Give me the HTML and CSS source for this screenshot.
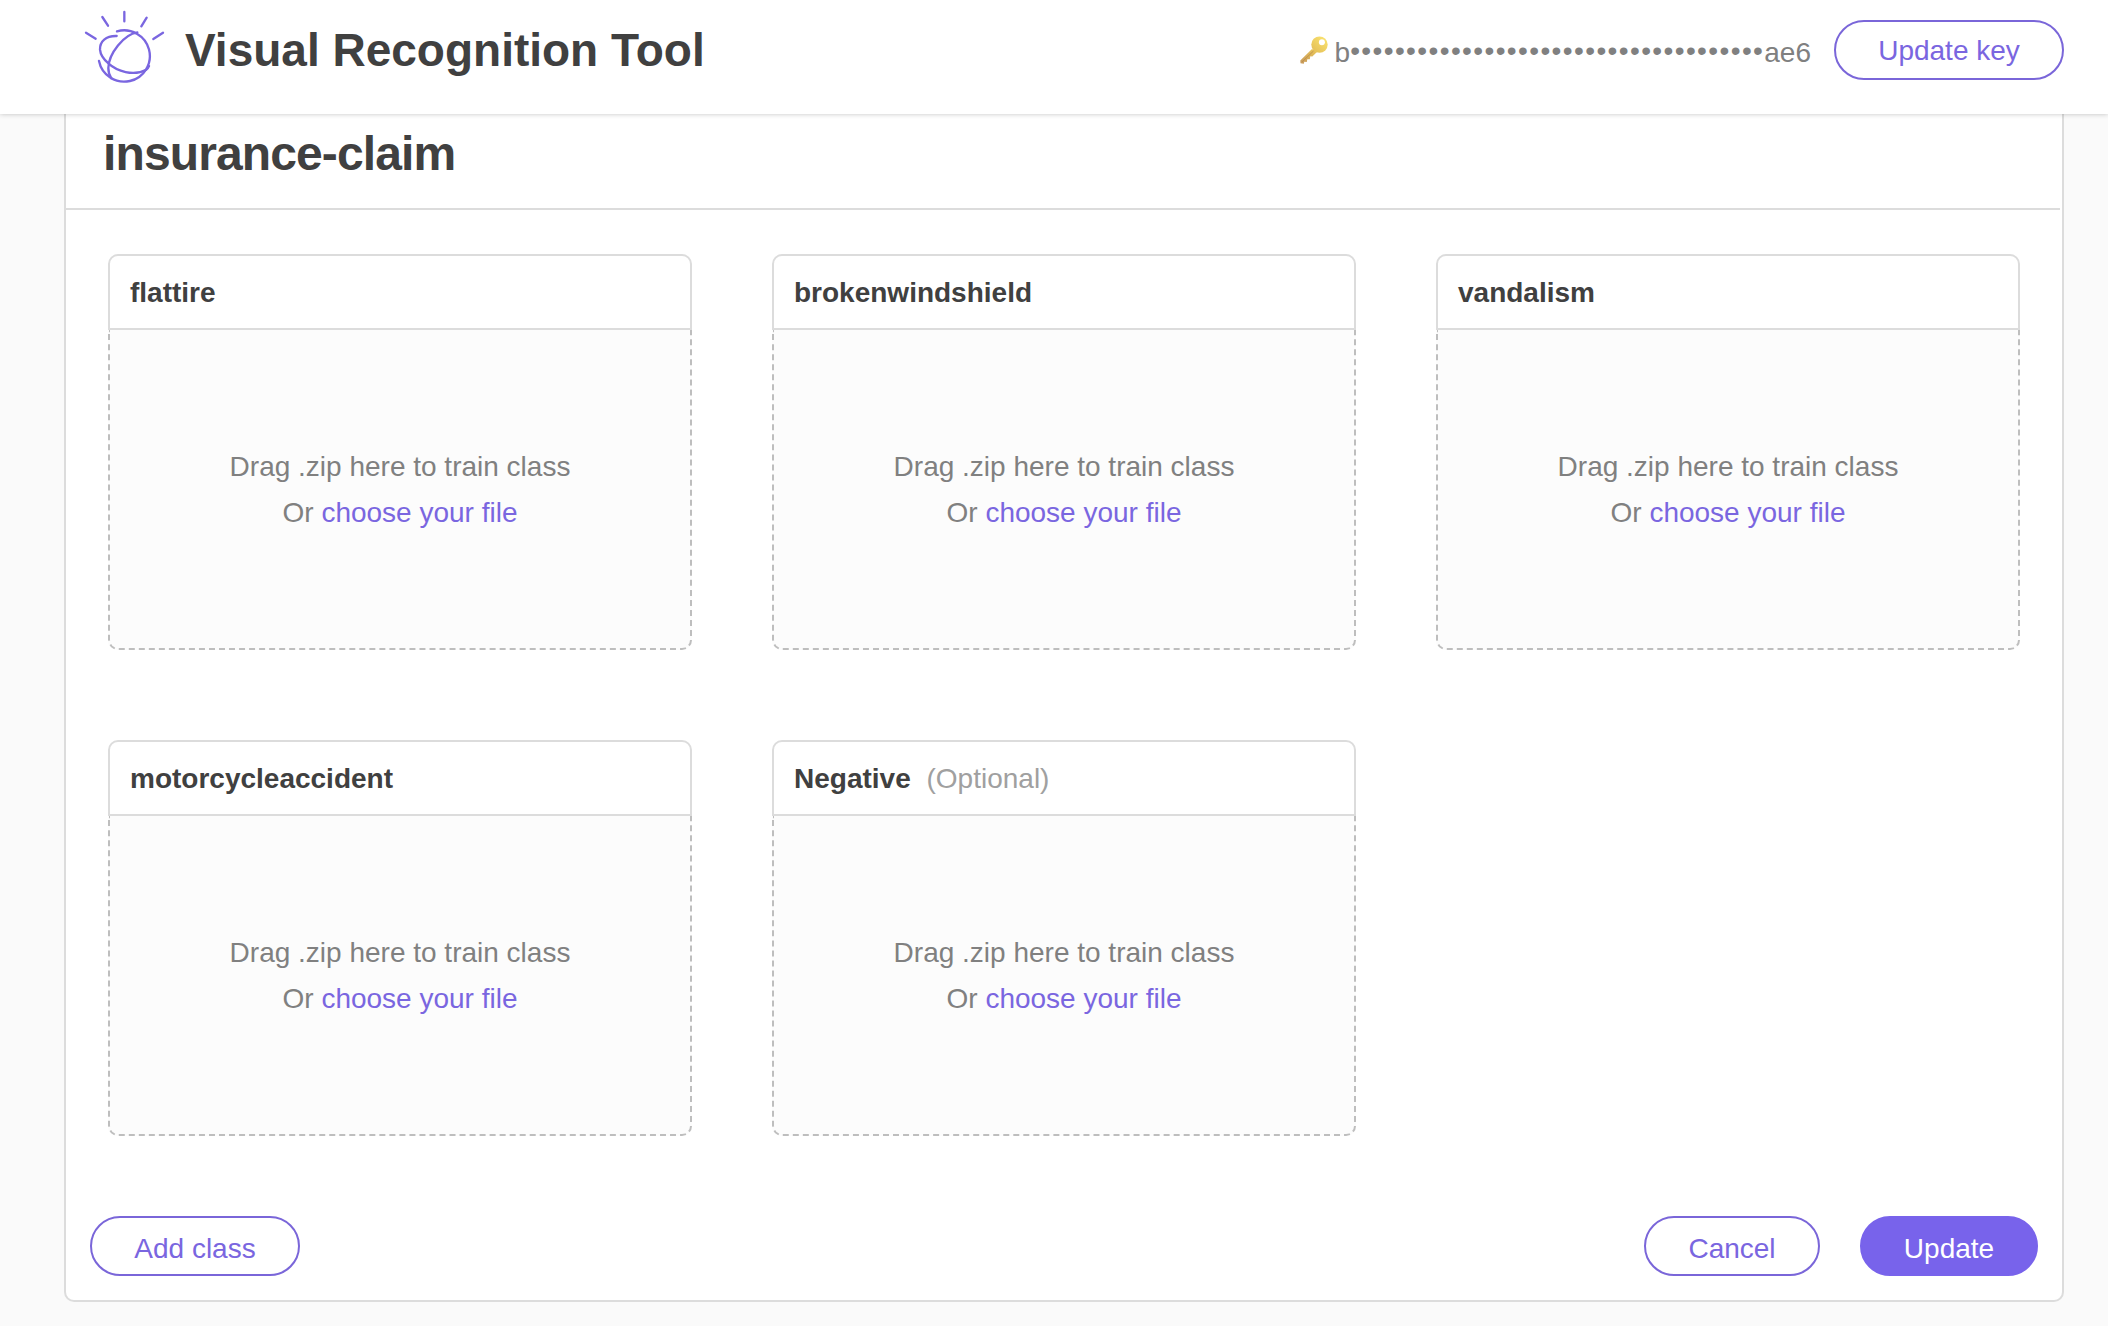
FILE: index.html
```html
<!DOCTYPE html>
<html lang="en">
<head>
<meta charset="utf-8">
<title>Visual Recognition Tool</title>
<link rel="stylesheet" href="styles.css">
</head>
<body>
<header class="topbar">
  <svg class="logo" viewBox="99 30 246 222" fill="none" stroke="#7a66e0" stroke-width="7" stroke-linecap="round" stroke-linejoin="round">
    <path d="M108 98l29 18M157 51l17 26M223 36v28M290 53l-16 26M339 98l-29 19"/>
    <path d="M201 94A77 77 0 1 1 147 183"/>
    <path d="M200 108C168 107 149 124 150 149C151 162 163 180 176 191C200 213 250 230 289 209Q294 205 297 198"/>
    <path d="M262 97C222 103 176 160 175 204C175 216 178 226 184 235"/>
  </svg>
  <h1 class="brand">Visual Recognition Tool</h1>
  <div class="key">
    <svg class="key-icon" viewBox="0 0 28 28">
      <defs><linearGradient id="gold" gradientUnits="userSpaceOnUse" x1="24" y1="2" x2="2" y2="27"><stop offset="0" stop-color="#f8e06e"/><stop offset=".5" stop-color="#e5c058"/><stop offset="1" stop-color="#c99c5c"/></linearGradient></defs>
      <path fill="url(#gold)" d="M12 13L.3 24.500L.5 27.300L3.800 27.800L4.300 25.800L6.800 26L7.300 23.300L9.800 23.300L10.300 20.300L12.300 20.500L17 16Z"/>
      <circle cx="19.500" cy="8.600" r="8.200" fill="url(#gold)"/>
      <circle cx="21.900" cy="6.300" r="3" fill="#fff"/>
      <path fill="none" stroke="#b98a49" stroke-width=".8" d="M2 26L13.500 15"/>
    </svg>
    <span class="key-text">b<span class="dots">•••••••••••••••••••••••••••••••••••••</span>ae6</span>
  </div>
  <button class="btn btn-key">Update key</button>
</header>
<main class="panel">
  <h2 class="title">insurance-claim</h2>
  <div class="classes">
    <section class="card">
      <h3 class="card-name">flattire</h3>
      <div class="drop"><span>Drag .zip here to train class</span><span>Or <a class="link">choose your file</a></span></div>
    </section>
    <section class="card">
      <h3 class="card-name">brokenwindshield</h3>
      <div class="drop"><span>Drag .zip here to train class</span><span>Or <a class="link">choose your file</a></span></div>
    </section>
    <section class="card">
      <h3 class="card-name">vandalism</h3>
      <div class="drop"><span>Drag .zip here to train class</span><span>Or <a class="link">choose your file</a></span></div>
    </section>
    <section class="card">
      <h3 class="card-name">motorcycleaccident</h3>
      <div class="drop"><span>Drag .zip here to train class</span><span>Or <a class="link">choose your file</a></span></div>
    </section>
    <section class="card">
      <h3 class="card-name">Negative <span class="optional">(Optional)</span></h3>
      <div class="drop"><span>Drag .zip here to train class</span><span>Or <a class="link">choose your file</a></span></div>
    </section>
  </div>
  <footer class="actions">
    <button class="btn btn-add">Add class</button>
    <button class="btn btn-cancel">Cancel</button>
    <button class="btn btn-update">Update</button>
  </footer>
</main>
</body>
</html>
```
FILE: styles.css
```css
* { box-sizing: border-box; }

body {
  margin: 0;
  height: 1326px;
  overflow: hidden;
  background: #fafafa;
  color: #404040;
  font: 28px "Liberation Sans", Helvetica, Arial, sans-serif;
}

h1, h2, h3 { margin: 0; }

.topbar {
  position: relative;
  z-index: 1;
  display: flex;
  align-items: center;
  height: 114px;
  padding: 0 44px 14px 83px;
  background: #fff;
  box-shadow: 0 0 5px rgba(0, 0, 0, .24);
}

.logo { width: 82px; height: 74px; margin-top: -6px; }
.brand { margin-left: 20px; font-size: 46px; line-height: 60px; white-space: nowrap; }

.key { display: flex; align-items: center; margin-left: auto; color: #808080; }
.key-icon { width: 28px; height: 28px; margin-right: 7px; }
.key-text { padding-top: 6px; line-height: 32px; white-space: nowrap; }
.dots { letter-spacing: 1.39px; vertical-align: 2px; line-height: 1; }

.btn {
  height: 60px;
  padding: 6px 0 0;
  border: 2px solid #7a66d9;
  border-radius: 30px;
  background: #fff;
  color: #7a66e0;
  font: inherit;
  text-align: center;
}
.btn-key { width: 230px; margin-left: 23px; padding-top: 2px; }
.btn-add { width: 210px; margin-right: auto; }
.btn-cancel { width: 176px; margin-right: 40px; }
.btn-update { width: 178px; border-color: #7863eb; background: #7863eb; color: #fff; }

.panel {
  width: 2000px;
  height: 1188px;
  margin-left: 64px;
  border: 2px solid #dcdcdc;
  border-top: 0;
  border-radius: 0 0 10px 10px;
  background: #fff;
}

.title {
  height: 96px;
  margin-right: 2px;
  padding: 10px 0 0 37px;
  border-bottom: 2px solid #dcdcdc;
  font-size: 48px;
  line-height: 60px;
  letter-spacing: -.88px;
}

.classes {
  display: grid;
  grid-template-columns: repeat(3, 584px);
  gap: 90px 80px;
  padding: 44px 42px 0;
}

.card { height: 396px; }
.card-name {
  height: 76px;
  padding: 1px 0 0 20px;
  border: 2px solid #dcdcdc;
  border-radius: 10px 10px 0 0;
  font-size: 28px;
  line-height: 72px;
}
.optional { margin-left: 8px; color: #a0a0a0; font-weight: normal; }

.drop {
  display: flex;
  flex-direction: column;
  align-items: center;
  justify-content: center;
  height: 320px;
  padding-top: 2px;
  border: 2px dashed #bebebe;
  border-top: 0;
  border-radius: 0 0 10px 10px;
  background: #fcfcfc;
  color: #808080;
  line-height: 46px;
}
.link { color: #7a66e0; }

.actions { display: flex; padding: 80px 24px 0; }
```
